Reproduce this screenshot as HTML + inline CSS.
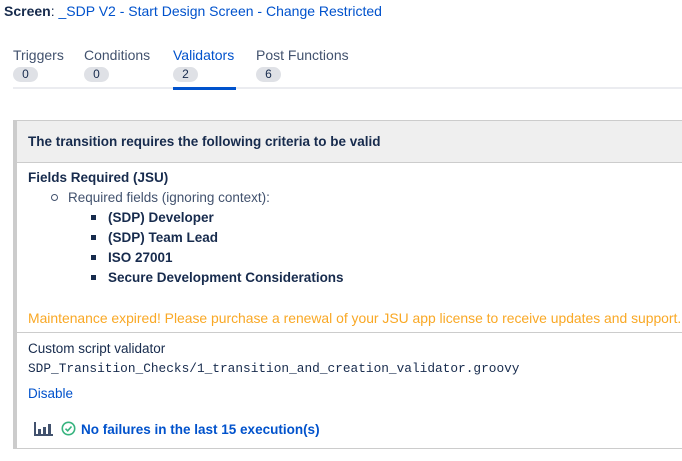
<!DOCTYPE html>
<html><head><style>
body{margin:0;width:682px;height:461px;overflow:hidden;background:#fff;font-family:"Liberation Sans",sans-serif;font-size:13.5px;color:#172b4d;position:relative}
.a{position:absolute;white-space:nowrap}
.link{color:#0052cc}
.tab{position:absolute;top:47px;color:#42526e;font-size:14px}
.badge{position:absolute;top:67px;height:15px;line-height:15px;background:#dfe1e6;border-radius:8px;font-size:12px;color:#172b4d;text-align:center;width:25px}
.box{position:absolute;left:13px;top:120px;width:700px;height:329px;border:1px solid #ccc;border-left:4px solid #ccc;box-sizing:border-box}
.hdr{position:absolute;left:0;top:0;right:0;height:41px;background:#efefef;border-bottom:1px solid #ccc}
.sq{position:absolute;width:5px;height:5px;background:#172b4d}
</style></head><body>
<div class="a" style="left:4px;top:3px;font-size:14px"><b>Screen</b>: <span class="link">_SDP V2 - Start Design Screen - Change Restricted</span></div>
<div class="tab" style="left:13px">Triggers</div><div class="badge" style="left:13px">0</div>
<div class="tab" style="left:84px">Conditions</div><div class="badge" style="left:84px">0</div>
<div class="tab" style="left:173px;color:#0052cc">Validators</div><div class="badge" style="left:173px">2</div>
<div class="tab" style="left:256px">Post Functions</div><div class="badge" style="left:256px">6</div>
<div class="a" style="left:13px;top:87px;width:669px;height:2px;background:#ebecf0"></div>
<div class="a" style="left:173px;top:87px;width:63px;height:3px;background:#0052cc"></div>
<div class="box"><div class="hdr"></div></div>
<div class="a" style="left:28px;top:134px;font-weight:bold">The transition requires the following criteria to be valid</div>
<div class="a" style="left:28px;top:170px;font-weight:bold">Fields Required (JSU)</div>
<div class="a" style="left:51px;top:194px;width:5px;height:5px;border:1px solid #42526e;border-radius:50%"></div>
<div class="a" style="left:68px;top:190px;color:#42526e">Required fields (ignoring context):</div>
<div class="sq" style="left:91px;top:215px"></div><div class="a" style="left:108px;top:210px;font-weight:bold">(SDP) Developer</div>
<div class="sq" style="left:91px;top:235px"></div><div class="a" style="left:108px;top:230px;font-weight:bold">(SDP) Team Lead</div>
<div class="sq" style="left:91px;top:255px"></div><div class="a" style="left:108px;top:250px;font-weight:bold">ISO 27001</div>
<div class="sq" style="left:91px;top:275px"></div><div class="a" style="left:108px;top:270px;font-weight:bold">Secure Development Considerations</div>
<div class="a" style="left:28px;top:310px;color:#f9a825;font-size:13.9px">Maintenance expired! Please purchase a renewal of your JSU app license to receive updates and support.</div>
<div class="a" style="left:17px;top:332px;width:665px;height:1px;background:#ccc"></div>
<div class="a" style="left:28px;top:341px">Custom script validator</div>
<div class="a" style="left:28px;top:361px;font-family:'Liberation Mono',monospace;font-size:12.8px">SDP_Transition_Checks/1_transition_and_creation_validator.groovy</div>
<div class="a link" style="left:28px;top:386px">Disable</div>
<svg class="a" style="left:34px;top:422px" width="20" height="14" viewBox="0 0 20 14"><path d="M1 0V13H19" stroke="#42526e" stroke-width="2" fill="none"/><rect x="4" y="7" width="3" height="5" fill="#42526e"/><rect x="9" y="5" width="3" height="7" fill="#42526e"/><rect x="14" y="2" width="3" height="10" fill="#42526e"/></svg>
<svg class="a" style="left:61px;top:421px" width="15" height="15" viewBox="0 0 15 15"><circle cx="7.5" cy="7.5" r="6.2" stroke="#36b37e" stroke-width="1.6" fill="none"/><path d="M4.5 7.7L6.7 9.8L10.5 5.5" stroke="#36b37e" stroke-width="1.6" fill="none"/></svg>
<div class="a link" style="left:81px;top:422px;font-weight:bold">No failures in the last 15 execution(s)</div>
</body></html>
